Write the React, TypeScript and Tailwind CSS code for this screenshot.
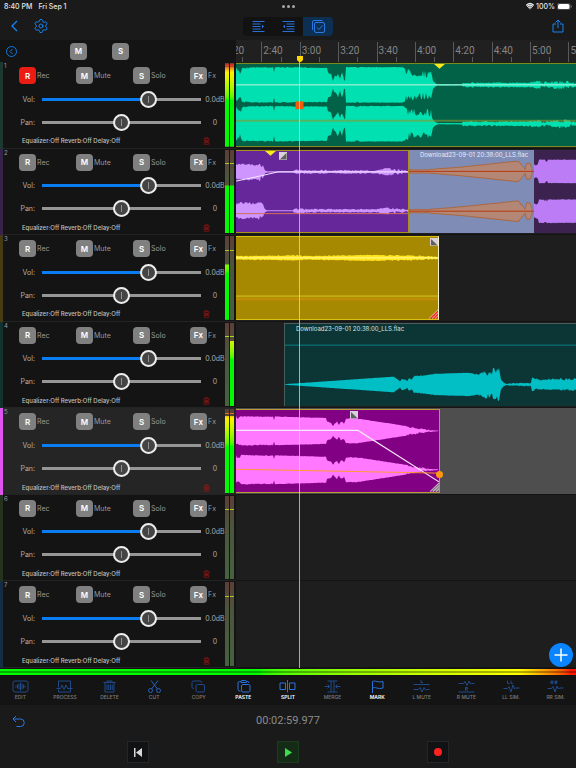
import { ReactNode } from 'react';
import { Settings, Wifi } from 'lucide-react';
import { clsx } from 'clsx';

type Point = [x: number, amp: number, jitter?: number];

interface Track {
  id: number;
  strip: string;
  armed?: boolean;
  selected?: boolean;
  left: number;
  right: number;
  peak: number;
  peakColor: string;
}

// levels and peaks are measured from the top of the meter, in percent
const tracks: Track[] = [
  { id: 1, strip: 'bg-[#1d382f]', armed: true, left: 1, right: 1, peak: 3, peakColor: 'bg-[#b5402a]' },
  { id: 2, strip: 'bg-[#37224a]', left: 43, right: 43, peak: 16, peakColor: 'bg-[#a8c81c]' },
  { id: 3, strip: 'bg-[#463b12]', left: 34, right: 100, peak: 16, peakColor: 'bg-[#a8c81c]' },
  { id: 4, strip: 'bg-[#12322f]', left: 100, right: 22, peak: 16, peakColor: 'bg-[#a8d81c]' },
  { id: 5, strip: 'bg-[#dd55ee]', selected: true, left: 8, right: 8, peak: 5, peakColor: 'bg-[#e07018]' },
  { id: 6, strip: 'bg-[#26331c]', left: 100, right: 100, peak: 16, peakColor: 'bg-[#a8c81c]' },
  { id: 7, strip: 'bg-[#142d45]', left: 100, right: 100, peak: 16, peakColor: 'bg-[#a8c81c]' },
];

const PX_PER_SECOND = 1.92;
const VIEW_START = 146.8;
const TICK = 20;
const CH1 = 21.5;
const CH2 = 61.5;

function random(seed: number) {
  let s = seed;
  return () => {
    s = (s * 16807) % 2147483647;
    return s / 2147483647;
  };
}

function wavePath(env: Point[], center: number, seed: number) {
  const rnd = random(seed);
  const top: string[] = [];
  const bottom: string[] = [];
  for (let i = 0; i < env.length - 1; i++) {
    const [x0, a0, j = 0] = env[i];
    const [x1, a1] = env[i + 1];
    for (let x = x0; x < x1; x += 1) {
      const a = a0 + ((a1 - a0) * (x - x0)) / (x1 - x0);
      top.push(`${x.toFixed(1)},${(center - Math.max(0.3, a - rnd() * j)).toFixed(1)}`);
      bottom.unshift(`${x.toFixed(1)},${(center + Math.max(0.3, a - rnd() * j)).toFixed(1)}`);
    }
  }
  return `M${top.join('L')}L${bottom.join('L')}Z`;
}

const greenEnv: Point[] = [
  [0, 18, 3], [4, 15, 5], [6, 18.5, 2], [13, 18.5, 1], [37, 18.5, 0], [38, 13, 0], [39, 18.5, 0.8],
  [91, 18, 1], [92, 14, 2], [95, 12, 1], [97, 4, 0], [99, 10, 3], [102, 13, 2], [104, 7, 1], [106, 13, 3],
  [109, 4, 0], [110, 18.5, 0.4], [120, 18.5, 2], [123, 18.5, 0.5], [167, 18.5, 1], [170, 17, 8], [182, 16, 8],
  [195, 15, 4], [197, 4, 0], [200, 1.2, 0], [202, 0.8, 0.3], [226, 0.8, 0], [227, 3, 1.6], [260, 2.8, 1.2],
  [293, 3, 2], [305, 5, 4], [312, 3, 2], [322, 5, 4], [330, 5, 3], [336, 3, 2], [800, 3, 2],
];
const purpleEnv: Point[] = [
  [0, 8, 3], [4, 9, 2], [18, 8.5, 3], [24, 10, 6], [27, 7, 1], [29, 1.5, 0], [31, 0.6, 0], [58, 0.6, 0],
  [58, 2.6, 1.6], [100, 2.2, 1.2], [140, 2, 1.2], [153, 4.5, 3], [162, 3, 2], [173, 2, 0],
];
const fadedEnv: Point[] = [
  [0, 2, 0.8], [20, 2, 0.4], [57, 5, 0.3], [108, 10.4, 0.3], [110, 10, 1], [114, 5, 0], [116, 2, 0],
  [118, 9, 1], [121, 8, 0], [123, 3, 0], [124, 8, 0],
];
const violetEnv: Point[] = [
  [0, 8, 2], [4, 8, 0], [5, 12, 0.5], [11, 12, 3], [14, 12, 0.5], [500, 12, 1],
];
const yellowEnv: Point[] = [
  [0, 2.2, 1], [45, 2.8, 1.4], [62, 3.5, 1.6], [68, 2.4, 1], [112, 3, 0.6], [130, 3.2, 0.6], [150, 3.2, 1.4],
  [175, 3, 1.6], [203, 2, 1],
];
const tealEnv: Point[] = [
  [0, 0.3, 0], [109, 8, 0.4], [113, 5, 0], [115, 3, 0], [117, 6, 1], [121, 5, 0], [122, 3, 0], [124, 6.5, 0.5],
  [127, 5, 0], [129, 9, 1], [138, 9.5, 0.6], [150, 11, 0.3], [185, 12, 0.4], [190, 11, 3], [197, 13, 3],
  [201, 15, 8], [208, 17.5, 6], [214, 17, 1], [216, 5, 0], [219, 1.5, 0], [222, 0.5, 0], [226, 1.6, 1],
  [246, 2, 0.5], [247, 7, 0], [250, 6, 2], [270, 6.5, 2.6], [292, 7, 2.6], [700, 6, 3],
];
const pinkEnv: Point[] = [
  [0, 15.5, 4], [5, 15.5, 1], [37, 15, 0], [38, 11, 0], [39, 15, 0.4], [91, 13.5, 0], [91, 10, 1], [95, 9, 1],
  [97, 5, 0], [99, 8, 1], [101, 10, 1], [103, 6, 0], [105, 10, 1], [108, 9, 2], [110, 13, 0.6], [121, 13, 1],
  [123, 12.6, 0.3], [171, 5, 1.6], [196, 1, 0.4], [203, 0.4, 0],
];

function Wave({ env, seed, width, stereo, fill, children }: {
  env: Point[]; seed: number; width: number; stereo?: boolean; fill: string; children?: ReactNode;
}) {
  return (
    <svg width={width} viewBox={`0 0 ${width} 84`} preserveAspectRatio="none" className="block h-full max-w-none" aria-hidden="true">
      <g className={fill}>
        {stereo && <path d={wavePath(env, CH1, seed)} />}
        <path d={wavePath(env, CH2, seed + 11)} />
      </g>
      {children}
    </svg>
  );
}

/* ---------- Track panel ---------- */

function PadButton({ label, name, active }: { label: string; name: string; active?: boolean }) {
  return (
    <button
      aria-label={name}
      className={clsx(
        'flex h-[17px] w-[17px] shrink-0 items-center justify-center rounded text-[8px] font-semibold text-white',
        active ? 'bg-[#ea1c14]' : 'bg-[#808080]'
      )}
    >
      {label}
    </button>
  );
}

function Meter({ level, peak, peakColor }: { level: number; peak: number; peakColor: string }) {
  return (
    <div className="relative h-full w-1 bg-linear-to-b from-[#5b3e38] via-[#4c553d] via-35% to-[#46623f]">
      <div
        className="absolute inset-0 bg-linear-to-b from-[#c8321e] from-2% via-[#fff000] via-11% to-[#00fa00] to-44%"
        style={{ clipPath: `inset(${level}% 0 0 0)` }}
      />
      <div className={clsx('absolute inset-x-0 h-px', peakColor)} style={{ top: `${peak}%` }} />
    </div>
  );
}

const rangeClass =
  'h-[17px] w-[159px] shrink-0 appearance-none bg-transparent ' +
  '[&::-webkit-slider-runnable-track]:flex [&::-webkit-slider-runnable-track]:h-[17px] [&::-webkit-slider-runnable-track]:items-center ' +
  '[&::-webkit-slider-runnable-track]:bg-size-[100%_3px] [&::-webkit-slider-runnable-track]:bg-center [&::-webkit-slider-runnable-track]:bg-no-repeat ' +
  '[&::-webkit-slider-thumb]:h-[17px] [&::-webkit-slider-thumb]:w-[17px] [&::-webkit-slider-thumb]:appearance-none [&::-webkit-slider-thumb]:rounded-full ' +
  '[&::-webkit-slider-thumb]:border-2 [&::-webkit-slider-thumb]:border-[#ededed] [&::-webkit-slider-thumb]:bg-[#444444] ' +
  '[&::-webkit-slider-thumb]:bg-[linear-gradient(#909090,#909090)] [&::-webkit-slider-thumb]:bg-size-[1px_7px] [&::-webkit-slider-thumb]:bg-center [&::-webkit-slider-thumb]:bg-no-repeat';

function Fader({ id, label, value, text, filled }: { id: string; label: string; value: number; text: string; filled?: boolean }) {
  return (
    <div className="flex items-center">
      <label htmlFor={id} className="w-[16px] text-right text-[7px] leading-none text-[#b0b0b0]">{label}</label>
      <input
        id={id}
        type="range"
        min={0}
        max={1000}
        defaultValue={value}
        className={clsx(
          rangeClass,
          'ml-[7px]',
          filled
            ? '[&::-webkit-slider-runnable-track]:bg-[linear-gradient(to_right,#0a7df2_66%,#969696_66%)]'
            : '[&::-webkit-slider-runnable-track]:bg-[linear-gradient(#969696,#969696)]'
        )}
      />
      <span className="ml-1 w-5 text-center text-[7px] leading-none text-[#a8a8a8]">{text}</span>
    </div>
  );
}

function TrashIcon({ className }: { className?: string }) {
  return (
    <svg viewBox="0 0 14 16" className={className} fill="none" stroke="currentColor" strokeWidth="1.3" aria-hidden="true">
      <path d="M1 3.5h12M4.5 3.5v-2h5v2M2.5 3.5v11h9v-11M5 6v6M7 6v6M9 6v6" />
    </svg>
  );
}

function TrackPanel({ track }: { track: Track }) {
  return (
    <section className={clsx('flex min-h-[84px] flex-1 basis-0 border-b border-[#232323]', track.selected ? 'bg-[#252525]' : 'bg-[#141414]')}>
      <div className={clsx('-mb-px w-[3px]', track.strip)} />
      <div className="w-4 pl-px text-[6px] leading-[7px] text-[#9a9a9a]">{track.id}</div>
      <div className="grid flex-1 grid-rows-[27px_20px_26px_1fr]">
        <div className="grid grid-cols-[57px_57px_57px_1fr] items-center text-[7px] leading-none text-[#9a9a9a]">
          <div className="flex items-center gap-px"><PadButton label="R" name={`Record track ${track.id}`} active={track.armed} />Rec</div>
          <div className="flex items-center gap-px"><PadButton label="M" name={`Mute track ${track.id}`} />Mute</div>
          <div className="flex items-center gap-px"><PadButton label="S" name={`Solo track ${track.id}`} />Solo</div>
          <div className="flex items-center gap-px"><PadButton label="Fx" name={`Effects track ${track.id}`} />Fx</div>
        </div>
        <Fader id={`vol-${track.id}`} label="Vol:" value={687} text="0.0dB" filled />
        <Fader id={`pan-${track.id}`} label="Pan:" value={500} text="0" />
        <div className="flex items-center justify-between pl-[3px] pr-[15px] text-[6px] font-medium leading-none text-[#c0c0c0]">
          <span>Equalizer:Off Reverb:Off Delay:Off</span>
          <button aria-label={`Delete track ${track.id}`} className="text-[#a01414]"><TrashIcon className="h-2 w-[7px]" /></button>
        </div>
      </div>
      <div className="flex gap-px py-px pr-0.5">
        <Meter level={track.left} peak={track.peak} peakColor={track.peakColor} />
        <Meter level={track.right} peak={track.peak} peakColor={track.peakColor} />
      </div>
    </section>
  );
}

/* ---------- Timeline ---------- */

function Lane({ children, selected }: { children?: ReactNode; selected?: boolean }) {
  return (
    <div className={clsx('relative min-h-[84px] flex-1 basis-0 overflow-hidden border-b border-[#141414]', selected ? 'bg-[#4e4e4e]' : 'bg-[#1e1e1e]')}>
      {children}
    </div>
  );
}

function Clip({ start, width, className, name, nameClass, children }: {
  start: number; width: number; className: string; name?: string; nameClass?: string; children: ReactNode;
}) {
  return (
    <div className={clsx('absolute inset-y-px overflow-hidden', className)} style={{ left: start, width }}>
      {children}
      {name && <span className={clsx('absolute left-[11px] top-px whitespace-nowrap text-[6px] leading-[7px]', nameClass)}>{name}</span>}
    </div>
  );
}

function FadeHandle({ x, flip }: { x: number; flip?: boolean }) {
  return (
    <g transform={`translate(${x} 1)`}>
      <rect width="8" height="8" fill="#d8d0d8" />
      <path d={flip ? 'M1 7.5V1l6.5 6.5z' : 'M7.5 1v6.5H1z'} fill="#606060" />
    </g>
  );
}

function Corner({ x, color }: { x: number; color: string }) {
  return (
    <g transform={`translate(${x} 75)`}>
      <path d="M9 0v9H0z" fill={color} />
      <path d="M0 9L9 0M3 9l6-6M6 9l3-3" stroke="#e8e0e0" strokeWidth="0.8" />
    </g>
  );
}

function formatTime(s: number) {
  return `${Math.floor(s / 60)}:${String(s % 60).padStart(2, '0')}`;
}

function Ruler() {
  const first = 140;
  const ticks = Array.from({ length: 10 }, (_, i) => first + i * TICK);
  return (
    <div className="h-[22px] shrink-0 overflow-hidden bg-[#202020]">
      <div className="flex h-full" style={{ marginLeft: (first - VIEW_START) * PX_PER_SECOND }}>
        {ticks.map((t) => (
          <div key={t} className="flex h-full shrink-0 items-end" style={{ width: TICK * PX_PER_SECOND }}>
            <div className="flex h-5 w-1/2 border-l border-[#5a5a5a] pl-px pt-[3px] font-[Roboto,sans-serif] text-[10px] leading-3 text-[#868686]">
              {formatTime(t)}
            </div>
            <div className="h-[5px] w-1/2 border-l border-[#5a5a5a]" />
          </div>
        ))}
      </div>
    </div>
  );
}

function Timeline() {
  return (
    <div className="relative flex min-w-0 flex-1 flex-col overflow-hidden">
      <Ruler />
      <Lane>
        <Clip start={0} width={800} className="border-y border-[#7c8c1c] bg-[#026247]">
          <Wave env={greenEnv} seed={7} width={800} stereo fill="fill-[#00e0b0]">
            <path d="M0 21.5h800" stroke="#c8f5e4" />
            <path d="M0 58.5h800" stroke="#8a9a30" strokeOpacity="0.6" strokeWidth="2" />
            <path d="M198 0h11l-5.500 5z" fill="#f6ea20" />
            <path d="M59.500 38.500h8v8h-8z" fill="#f45a08" />
          </Wave>
        </Clip>
      </Lane>
      <Lane>
        <Clip start={0} width={173} className="border-y border-r border-[#a8901c] bg-[#66279a]">
          <Wave env={purpleEnv} seed={23} width={173} stereo fill="fill-[#cf95ff]">
            <path d="M0 31Q24 26 42 21.500H173" fill="none" stroke="#f4eaff" />
            <path d="M0 64.500h173" stroke="#d07060" strokeWidth="1" />
            <path d="M29 0h11l-5.500 5z" fill="#f6ea20" />
            <FadeHandle x={43} />
          </Wave>
        </Clip>
        <Clip start={173} width={125} className="bg-[#7f8cb6]" name="Download23-09-01 20:38:00_LLS.flac" nameClass="text-[#e8ecf8]">
          <Wave env={fadedEnv} seed={31} width={125} stereo fill="fill-[#b38676] stroke-[#b0602a] stroke-[0.8]">
            <path d={`M0 ${CH1}h125M0 ${CH2}h125`} stroke="#b83a10" />
          </Wave>
        </Clip>
        <Clip start={298} width={500} className="bg-[#3c234f]">
          <Wave env={violetEnv} seed={41} width={500} stereo fill="fill-[#bc7cf6]" />
        </Clip>
      </Lane>
      <Lane>
        <Clip start={0} width={203} className="border-y border-r border-y-[#d8c010] border-r-[#f4f0d0] bg-[#a68900]">
          <Wave env={[[0, 0], [1, 0]]} seed={5} width={203} fill="fill-none">
            <path d={wavePath(yellowEnv, CH1, 53)} fill="#ffe61e" />
            <path d="M0 21.500h203" stroke="#fff8a0" />
            <path d="M0 61h203" stroke="#c4ac10" strokeWidth="2" />
            <path d="M0 64h203" stroke="#c88c0c" strokeWidth="2" />
            <FadeHandle x={194} flip />
            <Corner x={193} color="#f02818" />
          </Wave>
        </Clip>
      </Lane>
      <Lane>
        <Clip start={48} width={700} className="border-l border-t border-[#4a5c5c] bg-[#0c3635]" name="Download23-09-01 20:38:00_LLS.flac" nameClass="text-[#d8e4e4]">
          <Wave env={tealEnv} seed={61} width={700} fill="fill-[#02bec5]">
            <path d="M0 21.500h700" stroke="#0c8088" />
          </Wave>
        </Clip>
      </Lane>
      <Lane selected>
        <Clip start={0} width={204} className="border-y border-r border-[#b89c38] bg-[#820084]">
          <Wave env={pinkEnv} seed={71} width={204} stereo fill="fill-[#ff78ff]">
            <path d="M0 21h122L203 74" fill="none" stroke="#fbe8fb" strokeWidth="1.200" />
            <path d="M0 61l203 4" stroke="#ff9a30" />
            <FadeHandle x={114} flip />
            <Corner x={194} color="#8a7a8a" />
          </Wave>
        </Clip>
        <div className="absolute left-[200px] top-[63px] h-[7px] w-[7px] rounded-full bg-[#ff9a10]" />
      </Lane>
      <Lane />
      <Lane />

      {/* Playhead */}
      <div className="absolute bottom-0 top-4 flex w-[6px] flex-col items-center" style={{ left: (180 - VIEW_START) * PX_PER_SECOND - 3 }}>
        <svg viewBox="0 0 6 6" className="h-[6px] w-[6px] shrink-0" aria-hidden="true"><path d="M0 0h6v4L4 6H2L0 4z" fill="#ffd800" /></svg>
        <div className="w-px flex-1 bg-[#efe460]/75" />
      </div>

      <button aria-label="Add track" className="absolute bottom-px right-[3px] flex h-6 w-6 items-center justify-center rounded-full bg-[#0a84ff]">
        <svg viewBox="0 0 24 24" className="h-6 w-6" stroke="#fff" strokeWidth="1.500" aria-hidden="true"><path d="M12 5.500v13M5.500 12h13" /></svg>
      </button>
    </div>
  );
}

/* ---------- Edit toolbar ---------- */

const tools: { label: string; on?: boolean; icon: ReactNode }[] = [
  { label: 'EDIT', icon: <><rect x="4" y="2" width="30" height="22" rx="4" /><path d="M10 11v4M13 9v8M16 7v12M19 5v16M22 7v12M25 9v8M28 11v4" strokeWidth="2" /></> },
  { label: 'PROCESS', icon: <path d="M7 15V2h24v22H7v-5M3 17h8l3-7 4 9 4-9 3 7h10" /> },
  { label: 'DELETE', icon: <path d="M7 5h24M14 5V2h10v3M10 5v19h18V5M14 9v11M17.500 9v11M21 9v11M24.500 9v11" /> },
  { label: 'CUT', icon: <g className="stroke-[#2463bd]"><path d="M12 1l13 17M26 1L13 18" /><circle cx="11" cy="21" r="4" /><circle cx="27" cy="21" r="4" /></g> },
  { label: 'COPY', icon: <><rect x="14" y="9" width="17" height="15" rx="3" /><path d="M10 17H9a3 3 0 0 1-3-3V5a3 3 0 0 1 3-3h13a3 3 0 0 1 3 3v1" /></> },
  { label: 'PASTE', on: true, icon: <><path d="M13 22h-2a3 3 0 0 1-3-3V6a3 3 0 0 1 3-3h3M25 3h2a3 3 0 0 1 3 3M14 5V3a2 2 0 0 1 2-2h7a2 2 0 0 1 2 2v2z" /><rect x="15" y="9" width="17" height="15" rx="3" /></> },
  { label: 'SPLIT', on: true, icon: <path d="M15 6H4v13h11zM23 6h11v13H23zM19 0v25" /> },
  { label: 'MERGE', icon: <path d="M9 2h20M9 24h20M16 2v22M22 2v22M3 13h10M9 9l4 4-4 4M35 13H25M29 9l-4 4 4 4" /> },
  { label: 'MARK', on: true, icon: <path d="M9 26V3c6-3 10 3 21 0v13c-11 3-15-3-21 0" /> },
  { label: 'L MUTE', icon: <path d="M3 9h32M18 0v5h4M3 19h10l3-4 4 9 4-9 3 5 2-1h6" /> },
  { label: 'R MUTE', icon: <path d="M3 7h10l3-4 4 8 4-9 3 6 2-1h6M3 24h32M17 21v-6h4v3h-4l4 3" /> },
  { label: 'LL SIM.', icon: <path d="M11 1v6h4M18 1v6h4M3 17h8l3-4 4 11 4-14 3 8 2-2h8" /> },
  { label: 'RR SIM.', icon: <path d="M10 8V2h4v3h-4l4 3M18 8V2h4v3h-4l4 3M3 17h8l3-4 4 11 4-12 3 6 2-2h8" /> },
];

function EditToolbar() {
  return (
    <nav className="-mx-0.5 flex h-[29px] shrink-0 bg-[#141414]">
      {tools.map(({ label, on, icon }) => (
        <button key={label} className="flex flex-1 basis-0 flex-col items-center gap-px pt-1">
          <svg
            viewBox="0 0 38 26"
            className={clsx('h-[13px] w-[19px]', on ? 'stroke-[#2a72dc]' : 'stroke-[#1e4a8a]')}
            fill="none"
            strokeWidth="2"
            aria-hidden="true"
          >
            {icon}
          </svg>
          <span className={clsx('whitespace-nowrap text-[5px] leading-[7px]', on ? 'font-semibold text-white' : 'font-medium text-[#7c7c7c]')}>{label}</span>
        </button>
      ))}
    </nav>
  );
}

function StatusBar() {
  return (
    <div className="grid h-3 shrink-0 grid-cols-[1fr_auto_1fr] items-center px-1 text-[7px] font-medium leading-none text-[#e8e8e8]">
      <div className="flex gap-[6px]"><span>8:40 PM</span><span>Fri Sep 1</span></div>
      <div className="flex gap-0.5">
        <i className="h-[3px] w-[3px] rounded-full bg-[#a8a8a8]" />
        <i className="h-[3px] w-[3px] rounded-full bg-[#a8a8a8]" />
        <i className="h-[3px] w-[3px] rounded-full bg-[#a8a8a8]" />
      </div>
      <div className="flex items-center justify-end gap-0.5">
        <Wifi className="h-2 w-2" strokeWidth={4} />
        <span>100%</span>
        <svg viewBox="0 0 30 14" className="h-[7px] w-[15px]" aria-hidden="true">
          <rect x="0.500" y="0.500" width="26" height="13" rx="4" fill="none" stroke="#8a8a8a" />
          <rect x="2" y="2" width="23" height="10" rx="3" fill="#fff" />
          <path d="M28 5c2 0 2 4 0 4z" fill="#8a8a8a" />
        </svg>
      </div>
    </div>
  );
}

function TopBar() {
  return (
    <header className="grid h-7 shrink-0 grid-cols-[1fr_auto_1fr] items-center text-[#1583f0]">
      <div className="flex items-center gap-3 pl-[9px]">
        <button aria-label="Back">
          <svg viewBox="0 0 12 12" className="h-3 w-3" fill="none" stroke="currentColor" strokeWidth="1.400" aria-hidden="true"><path d="M8 1L3 6l5 5" /></svg>
        </button>
        <button aria-label="Settings"><Settings className="h-4 w-4" strokeWidth={1.5} /></button>
      </div>
      <div className="flex h-[19px] overflow-hidden rounded bg-[#121212]">
        <button aria-label="Ripple forward" className="flex w-[30px] items-center justify-center">
          <svg viewBox="0 0 26 22" className="h-[11px] w-[13px]" fill="none" stroke="#2870d8" strokeWidth="2" aria-hidden="true"><path d="M1 1h24M1 6h16M1 11h16M1 16h16M1 21h24" /><path d="M20 7l4 4-4 4z" fill="#2870d8" stroke="none" /></svg>
        </button>
        <button aria-label="Ripple back" className="flex w-[30px] items-center justify-center">
          <svg viewBox="0 0 26 22" className="h-[11px] w-[13px]" fill="none" stroke="#2870d8" strokeWidth="2" aria-hidden="true"><path d="M1 1h24M9 6h16M9 11h16M9 16h16M1 21h24" /><path d="M6 7l-4 4 4 4z" fill="#2870d8" stroke="none" /></svg>
        </button>
        <button aria-label="Multi select" className="flex w-[30px] items-center justify-center bg-[#0c2f52]">
          <svg viewBox="0 0 26 26" className="h-[13px] w-[13px]" fill="none" stroke="#2a78e4" strokeWidth="2" aria-hidden="true"><rect x="5" y="5" width="20" height="20" rx="3" /><path d="M1 20V4a3 3 0 0 1 3-3h17M10 15l4 4 7-8" /></svg>
        </button>
      </div>
      <div className="flex justify-end pr-3">
        <button aria-label="Share">
          <svg viewBox="0 0 24 28" className="h-[14px] w-3" fill="none" stroke="currentColor" strokeWidth="2" aria-hidden="true"><path d="M8 10H2v16h20V10h-6M12 18V2M7 7l5-5 5 5" /></svg>
        </button>
      </div>
    </header>
  );
}

export default function App() {
  return (
    <div className="flex min-h-screen flex-col overflow-hidden bg-[#1a1a1a] font-[Inter,sans-serif]">
      <StatusBar />
      <TopBar />

      <main className="flex flex-1">
        <div className="flex w-[236px] shrink-0 flex-col bg-[#111111]">
          <div className="flex h-[22px] shrink-0 items-center bg-[#141414] pl-[6px]">
            <button aria-label="Collapse panel" className="text-[#1583f0]">
              <svg viewBox="0 0 22 22" className="h-[11px] w-[11px]" fill="none" stroke="currentColor" strokeWidth="1.800" aria-hidden="true"><circle cx="11" cy="11" r="10" /><path d="M13 6l-5 5 5 5" /></svg>
            </button>
            <div className="ml-[53px] flex gap-[25px]">
              <PadButton label="M" name="Mute all" />
              <PadButton label="S" name="Solo all" />
            </div>
          </div>
          {tracks.map((track) => (
            <TrackPanel key={track.id} track={track} />
          ))}
        </div>
        <Timeline />
      </main>

      {/* Master level */}
      <div className="flex h-2 shrink-0 flex-col bg-[#141414] py-px">
        <div className="flex-1 bg-linear-to-r from-[#00ff00] from-45% via-[#ffff00] via-90% to-[#ff1800] to-99%">
          <div className="h-full bg-[linear-gradient(transparent_2px,rgba(0,0,0,0.3)_2px,rgba(0,0,0,0.3)_4px,transparent_4px)]" />
        </div>
      </div>

      <EditToolbar />

      <footer className="shrink-0">
        <div className="grid h-8 grid-cols-[1fr_auto_1fr] items-center px-3">
          <button aria-label="Undo" className="justify-self-start">
            <svg viewBox="0 0 26 26" className="h-[13px] w-[13px]" fill="none" stroke="#2a78e4" strokeWidth="2" aria-hidden="true"><path d="M8 2L2 8l6 6M2 8h15a7 7 0 0 1 0 15H9" /></svg>
          </button>
          <time className="pt-px font-[Roboto,sans-serif] text-[11px] text-[#8c8c8c]">00:02:59.977</time>
        </div>
        <div className="flex justify-center gap-32 pb-[5px] pt-1">
          <button aria-label="Go to start" className="flex h-[22px] w-[22px] items-center justify-center border border-[#242628] bg-[#101214]">
            <svg viewBox="0 0 16 18" className="h-[9px] w-2" fill="#d8d8d8" aria-hidden="true"><path d="M0 0h3v18H0zM16 0v18L4 9z" /></svg>
          </button>
          <button aria-label="Play" className="flex h-[22px] w-[22px] items-center justify-center border border-[#1c3c1e] bg-[#142c16]">
            <svg viewBox="0 0 14 18" className="h-[9px] w-[7px]" fill="#3fdc50" aria-hidden="true"><path d="M0 0l14 9L0 18z" /></svg>
          </button>
          <button aria-label="Record" className="flex h-[22px] w-[22px] items-center justify-center border border-[#242628] bg-[#101214]">
            <i className="h-2 w-2 rounded-full bg-[#ff2020]" />
          </button>
        </div>
      </footer>
    </div>
  );
}
